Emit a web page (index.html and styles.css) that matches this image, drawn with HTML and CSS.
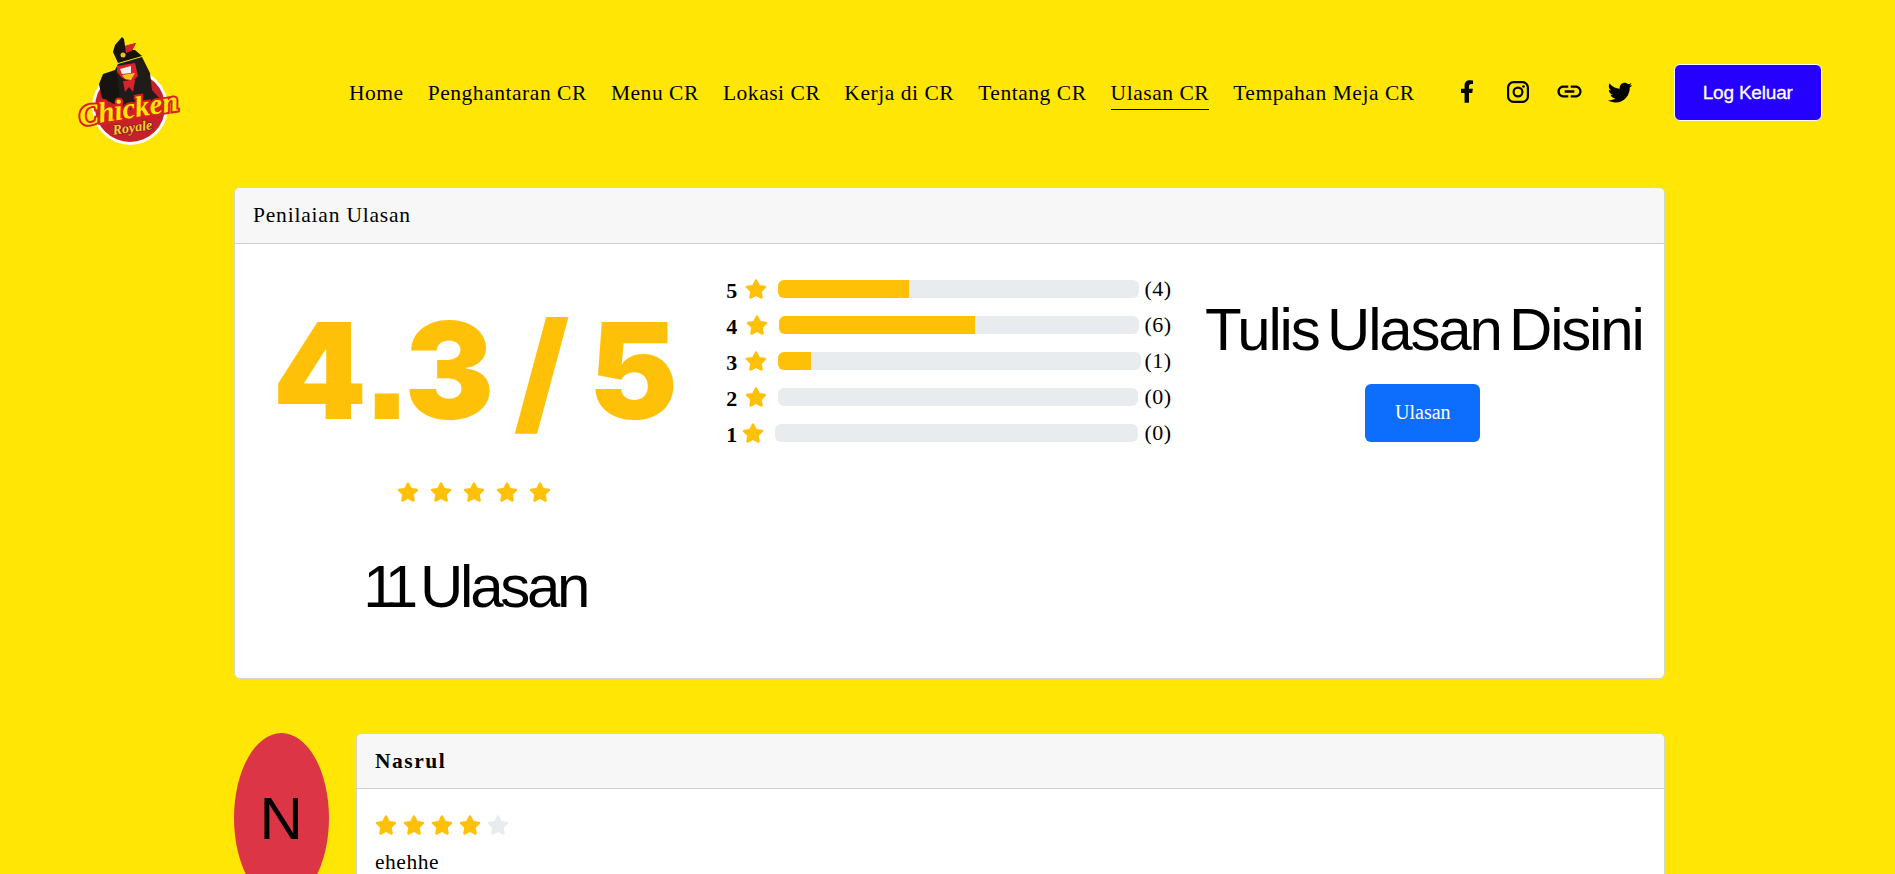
FILE: index.html
```html
<!DOCTYPE html>
<html lang="ms">
<head>
<meta charset="utf-8">
<title>Ulasan CR</title>
<link rel="stylesheet" href="styles.css">
</head>
<body>
<svg width="0" height="0" class="defs"><defs>
<symbol id="star" viewBox="0 0 576 512"><path d="M259.3 17.8 194 150.2 47.9 171.500c-26.200 3.800-36.700 36.100-17.700 54.600l105.700 103-25 145.500c-4.500 26.300 23.200 46 46.400 33.700L288 439.600l130.700 68.700c23.200 12.200 50.900-7.400 46.400-33.700l-25-145.500 105.700-103c19-18.500 8.500-50.800-17.700-54.600L382 150.200 316.700 17.800c-11.700-23.600-45.600-23.900-57.400 0z"/></symbol>
</defs></svg>
<header class="topbar">
  <svg class="logo" viewBox="0 0 160 140" width="160" height="140" role="img" aria-label="Chicken Royale">
    <circle cx="80" cy="87" r="38" fill="#fff"/>
    <circle cx="80" cy="87" r="35" fill="#c5202b"/>
    <path d="M68 44 L92 37 L100 53 L102 70 L110 79 L98 84 L72 92 L62 76 L60 60 Z" fill="#211c1a"/>
    <path d="M53 54 L65 50 L68 60 L70 80 L64 84 L52 78 L49 64 Z" fill="#17130f"/>
    <path d="M72 17 L65 25 L63 32 L68 43 L92 36 L85 30 L82 30 L86 23 L75 26 L74 19 Z" fill="#17130f"/>
    <path d="M75 26 L86 23 L82 31 L76 33 Z" fill="#d8232a"/>
    <circle cx="73" cy="35" r="2.500" fill="#e8c21f"/>
    <path d="M67 46 L85 43 L88 56 L82 62 L72 58 L67 52 Z" fill="#d8232a"/>
    <path d="M70 49 L81 46 L81 53 L72 54 Z" fill="#f2efe8"/>
    <path d="M72 55 L85 53 L81 60 L75 59 Z" fill="#f6c21c"/>
    <path d="M73 61 L85 60 L83 72 L79 67 L75 72 Z" fill="#d8232a"/>
    <text x="80" y="98" transform="rotate(-9 80 98)" class="logo-main">Chicken</text>
    <text x="83" y="112" transform="rotate(-8 83 112)" class="logo-sub">Royale</text>
  </svg>
  <nav class="nav">
    <a href="#">Home</a>
    <a href="#">Penghantaran CR</a>
    <a href="#">Menu CR</a>
    <a href="#">Lokasi CR</a>
    <a href="#">Kerja di CR</a>
    <a href="#">Tentang CR</a>
    <a href="#" class="active">Ulasan CR</a>
    <a href="#">Tempahan Meja CR</a>
  </nav>
  <div class="socials">
    <svg class="icon-f" viewBox="0 0 320 512" width="14" height="23"><path d="M279.140 288l14.220-92.660h-88.910v-60.130c0-25.350 12.420-50.060 52.240-50.060h40.420V6.260S260.430 0 225.360 0c-73.220 0-121.080 44.380-121.080 124.720v70.620H22.890V288h81.390v224h100.170V288z"/></svg>
    <svg class="icon-ig" viewBox="2 2 20 20" width="22" height="22"><rect x="3" y="3" width="18" height="18" rx="5" fill="none" stroke="#000" stroke-width="2"/><circle cx="12" cy="12" r="4" fill="none" stroke="#000" stroke-width="2"/><circle cx="17" cy="7" r="1.200"/></svg>
    <svg class="icon-link" viewBox="0 0 24 24" width="29" height="29"><path d="M3.900 12c0-1.710 1.390-3.100 3.100-3.100h4V7H7c-2.760 0-5 2.240-5 5s2.240 5 5 5h4v-1.900H7c-1.710 0-3.100-1.390-3.100-3.100zM8 13h8v-2H8v2zm9-6h-4v1.900h4c1.710 0 3.100 1.390 3.100 3.100s-1.390 3.100-3.100 3.100h-4V17h4c2.760 0 5-2.240 5-5s-2.240-5-5-5z"/></svg>
    <svg class="icon-tw" viewBox="0 0 24 24" width="28" height="28"><path d="M22.460 6c-.77.350-1.600.580-2.460.690.880-.530 1.560-1.370 1.880-2.380-.830.500-1.750.850-2.720 1.050C18.370 4.500 17.260 4 16 4c-2.350 0-4.270 1.920-4.270 4.290 0 .340.040.670.110.980C8.280 9.090 5.110 7.380 3 4.790c-.370.630-.580 1.370-.580 2.150 0 1.490.750 2.810 1.910 3.560-.710 0-1.370-.200-1.950-.500v.030c0 2.080 1.480 3.820 3.440 4.210-.360.100-.740.150-1.130.150-.270 0-.540-.030-.800-.080.580 1.710 2.160 2.980 4.050 3.010-1.480 1.170-3.340 1.860-5.360 1.860-.340 0-.690-.020-1.030-.060C3.440 20.290 5.700 21 8.120 21 16 21 20.330 14.460 20.330 8.790c0-.190 0-.370-.010-.560.840-.600 1.560-1.360 2.140-2.230z"/></svg>
  </div>
  <a href="#" class="logout">Log Keluar</a>
</header>
<main class="page">
  <section class="card">
    <div class="card-head">Penilaian Ulasan</div>
    <div class="summary">
      <div class="col-score">
        <div class="score">4<span class="dot">.</span>3 / 5</div>
        <div class="score-stars">
          <svg><use href="#star"/></svg><svg><use href="#star"/></svg><svg><use href="#star"/></svg><svg><use href="#star"/></svg><svg><use href="#star"/></svg>
        </div>
        <div class="heading count-total"><span class="tight">1</span>1 Ulasan</div>
      </div>
      <div class="col-bars">
        <div class="bar-row r5"><b>5</b><svg class="s"><use href="#star"/></svg><div class="track"><div class="fill" style="width:36.400%"></div></div><span class="cnt">(4)</span></div>
        <div class="bar-row r4"><b>4</b><svg class="s"><use href="#star"/></svg><div class="track"><div class="fill" style="width:54.500%"></div></div><span class="cnt">(6)</span></div>
        <div class="bar-row r3"><b>3</b><svg class="s"><use href="#star"/></svg><div class="track"><div class="fill" style="width:9.100%"></div></div><span class="cnt">(1)</span></div>
        <div class="bar-row r2"><b>2</b><svg class="s"><use href="#star"/></svg><div class="track"></div><span class="cnt">(0)</span></div>
        <div class="bar-row r1"><b>1</b><svg class="s"><use href="#star"/></svg><div class="track"></div><span class="cnt">(0)</span></div>
      </div>
      <div class="col-write">
        <div class="heading write-title">Tulis Ulasan Disini</div>
        <a href="#" class="write-btn">Ulasan</a>
      </div>
    </div>
  </section>
  <section class="review">
    <div class="avatar">N</div>
    <div class="card review-card">
      <div class="card-head strong">Nasrul</div>
      <div class="review-body">
        <div class="review-stars">
          <svg class="on"><use href="#star"/></svg><svg class="on"><use href="#star"/></svg><svg class="on"><use href="#star"/></svg><svg class="on"><use href="#star"/></svg><svg class="off"><use href="#star"/></svg>
        </div>
        <p class="review-text">ehehhe</p>
      </div>
    </div>
  </section>
</main>
</body>
</html>
```
FILE: styles.css
```css
* { box-sizing: border-box; }
html, body { height: 874px; overflow: hidden; }
body {
  margin: 0;
  background: #ffe605;
  color: #000;
  font-family: "Liberation Serif", serif;
  font-size: 21.500px;
  letter-spacing: .54px;
}
a { color: inherit; text-decoration: none; }
.defs { position: absolute; }

.topbar {
  height: 187px;
  display: flex;
  align-items: flex-start;
  padding: 20px 0 0 50px;
}
.logo { flex: none; }
.logo-main {
  font: italic bold 29px "Liberation Serif", serif;
  letter-spacing: 0;
  text-anchor: middle;
  fill: #ffe605;
  stroke: #d9201f;
  stroke-width: 4px;
  paint-order: stroke;
}
.logo-sub {
  font: italic bold 14px "Liberation Serif", serif;
  letter-spacing: 0;
  text-anchor: middle;
  fill: #f5cf2b;
  stroke: #8f1a1e;
  stroke-width: 1.500px;
  paint-order: stroke;
}
.nav {
  display: flex;
  flex: none;
  gap: 24px;
  margin-left: 139px;
  margin-top: 58px;
  line-height: 30px;
  white-space: nowrap;
}
.nav a { display: block; height: 32px; }
.nav a.active { border-bottom: 1px solid #000; }
.socials {
  display: flex;
  flex: none;
  align-items: center;
  height: 29px;
  margin-top: 57px;
  margin-left: 45px;
}
.socials svg { flex: none; }
.icon-ig { margin-left: 33px; }
.icon-link { margin-left: 26px; }
.icon-tw { margin-left: 22px; }
.logout {
  flex: none;
  margin-top: 44px;
  margin-left: 40px;
  width: 148px;
  height: 57px;
  display: flex;
  align-items: center;
  justify-content: center;
  background: #2600ff;
  color: #fff;
  border: 1px solid #fff;
  border-radius: 6px;
  font: 19px "Liberation Sans", sans-serif;
  letter-spacing: -.2px;
  -webkit-text-stroke: .3px #fff;
}

.page { width: 1431px; margin-left: 234px; }
.card {
  background: #fff;
  border: 1px solid #d5d5c5;
  border-radius: 6px;
  overflow: hidden;
}
.card-head {
  height: 56px;
  padding-left: 18px;
  line-height: 54px;
  letter-spacing: .8px;
  background: #f7f7f7;
  border-bottom: 1px solid #cfcfcf;
}
.card-head.strong { height: 55px; font-weight: bold; letter-spacing: 1.500px; }
.summary {
  display: grid;
  grid-template-columns: repeat(3, 1fr);
  height: 434px;
  padding: 16px 3px 0;
}
.col-score, .col-write { text-align: center; }
.score {
  margin-top: 24px;
  margin-right: 3px;
  font: 900 134px/173px Inter, "Liberation Sans", sans-serif;
  color: #ffc107;
  letter-spacing: -3.500px;
  white-space: nowrap;
}
.dot { font: bold 170px/0 "Liberation Sans", sans-serif; letter-spacing: -6px; }
.score-stars {
  margin-top: 23px;
  margin-right: 3px;
  height: 24px;
  display: flex;
  justify-content: center;
  gap: 11px;
}
.score-stars svg { width: 22px; height: 20px; margin-top: 2px; fill: #ffc107; }
.heading {
  font: 60px/72px "Liberation Sans", sans-serif;
  white-space: nowrap;
}
.write-title { letter-spacing: -2.200px; word-spacing: -6px; }
.count-total { margin-top: 47px; letter-spacing: -3.300px; word-spacing: -8px; }
.tight { letter-spacing: -12px; }

.col-bars {
  padding: 20px 12px 0;
  display: flex;
  flex-direction: column;
  gap: 18px;
}
.bar-row {
  display: flex;
  align-items: center;
  height: 18px;
  padding-left: 2px;
  font-size: 22px;
  letter-spacing: .5px;
}
.bar-row b { width: 14px; flex: none; margin-top: 4px; }
.bar-row .s { width: 22px; height: 20px; margin: 0 11px 0 5px; flex: none; fill: #ffc107; }
.track {
  flex: 1;
  height: 18px;
  background: #e9ecef;
  border-radius: 6px;
  overflow: hidden;
}
.fill { height: 100%; background: #ffc107; }
.cnt { flex: none; width: 36px; padding-right: 3px; text-align: right; }
.r4 .s { margin-left: 6px; }
.r3 .cnt { width: 34px; }
.r2 .cnt { width: 37px; }
.r1 b { width: 11px; }
.r1 .cnt { width: 37px; }

.col-write { padding-top: 34px; }
.write-btn {
  display: block;
  width: 115px;
  height: 58px;
  margin: 18px auto 0;
  position: relative;
  left: -1px;
  background: #0d6efd;
  color: #fff;
  border-radius: 6px;
  line-height: 56px;
  text-align: center;
  font-size: 20px;
  letter-spacing: 0;
}

.review {
  display: flex;
  gap: 27px;
  margin-top: 54px;
}
.avatar {
  flex: none;
  width: 95px;
  height: 170px;
  background: #dc3545;
  border-radius: 50%;
  display: flex;
  align-items: center;
  justify-content: center;
  font: 60px "Liberation Sans", sans-serif;
}
.review-card { flex: 1; height: 300px; }
.review-body { padding: 24px 18px; }
.review-stars { display: flex; gap: 6px; height: 24px; }
.review-stars svg { width: 22px; height: 20px; margin-top: 2px; }
.on { fill: #ffc107; }
.off { fill: #e9ecef; }
.review-text { margin: 10px 0 0; line-height: 30px; }
```
